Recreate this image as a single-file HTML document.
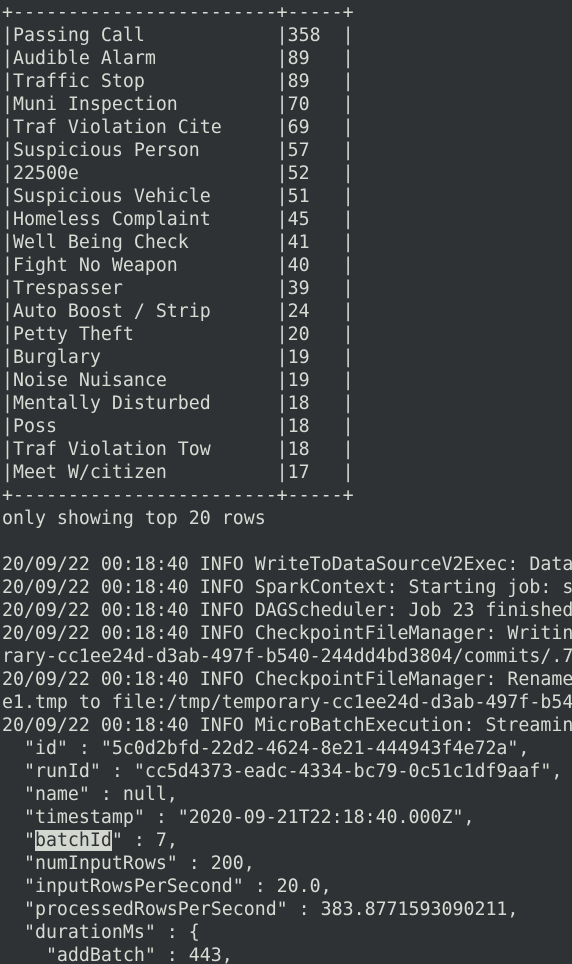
<!DOCTYPE html>
<html><head><meta charset="utf-8"><style>
html,body{margin:0;padding:0;background:#2f3234;width:572px;height:964px;overflow:hidden}
pre{margin:0;padding:1px 0 0 2px;font-family:"DejaVu Sans Mono","Liberation Mono",monospace;font-size:18.25px;line-height:23px;color:#d8dbd4;white-space:pre}
.h{background:#d3d7cf;color:#2f3234}
</style></head><body><pre>+------------------------+-----+
|Passing Call            |358  |
|Audible Alarm           |89   |
|Traffic Stop            |89   |
|Muni Inspection         |70   |
|Traf Violation Cite     |69   |
|Suspicious Person       |57   |
|22500e                  |52   |
|Suspicious Vehicle      |51   |
|Homeless Complaint      |45   |
|Well Being Check        |41   |
|Fight No Weapon         |40   |
|Trespasser              |39   |
|Auto Boost / Strip      |24   |
|Petty Theft             |20   |
|Burglary                |19   |
|Noise Nuisance          |19   |
|Mentally Disturbed      |18   |
|Poss                    |18   |
|Traf Violation Tow      |18   |
|Meet W/citizen          |17   |
+------------------------+-----+
only showing top 20 rows

20/09/22 00:18:40 INFO WriteToDataSourceV2Exec: Data
20/09/22 00:18:40 INFO SparkContext: Starting job: s
20/09/22 00:18:40 INFO DAGScheduler: Job 23 finished
20/09/22 00:18:40 INFO CheckpointFileManager: Writin
rary-cc1ee24d-d3ab-497f-b540-244dd4bd3804/commits/.7
20/09/22 00:18:40 INFO CheckpointFileManager: Rename
e1.tmp to file:/tmp/temporary-cc1ee24d-d3ab-497f-b54
20/09/22 00:18:40 INFO MicroBatchExecution: Streamin
  "id" : "5c0d2bfd-22d2-4624-8e21-444943f4e72a",
  "runId" : "cc5d4373-eadc-4334-bc79-0c51c1df9aaf",
  "name" : null,
  "timestamp" : "2020-09-21T22:18:40.000Z",
  "<span class="h">batchId</span>" : 7,
  "numInputRows" : 200,
  "inputRowsPerSecond" : 20.0,
  "processedRowsPerSecond" : 383.8771593090211,
  "durationMs" : {
    "addBatch" : 443,
</pre></body></html>
